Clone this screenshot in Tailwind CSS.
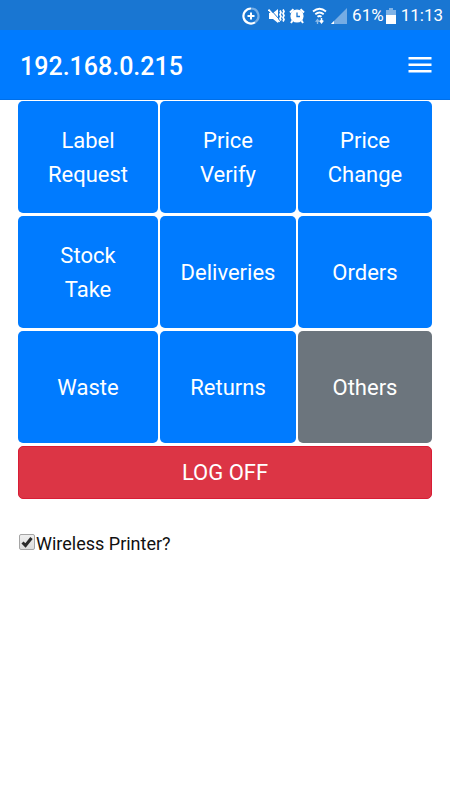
<!DOCTYPE html>
<html lang="en">
<head>
<meta charset="utf-8">
<meta name="viewport" content="width=device-width, initial-scale=1">
<title>192.168.0.215</title>
<script src="https://cdn.jsdelivr.net/npm/@tailwindcss/browser@4"></script>
</head>
<body class="min-h-screen bg-white font-['Roboto',sans-serif] text-[#111]">
  <div class="flex h-[30px] items-center justify-end bg-[#1976d2] pt-px pr-[7px] text-white">
    <svg class="mr-[8px] h-[18px] w-[18px]" viewBox="0 0 18 18" fill="none" stroke="currentColor" aria-hidden="true">
      <path d="M9 1.500A7.500 7.500 0 1 0 13 15.300" stroke-width="2.200"/>
      <path d="M9 1.500A7.500 7.500 0 0 1 13 15.300" stroke-width="2.200" opacity=".4"/>
      <path d="M9 5.500v7M5.500 9h7" stroke-width="2"/>
    </svg>
    <svg class="mr-[4px] h-[16px] w-[17px]" viewBox="0 0 17 16" aria-hidden="true">
      <path d="M1 5h4l5-4v14l-5-4H1z" fill="currentColor"/>
      <path d="M2.500 1.500 11 11" stroke="#1976d2" stroke-width="1"/>
      <path d="M.500 1.500l11 12.500" stroke="currentColor" stroke-width="1.800"/>
      <path d="M12 2.500l1 2-1 2 1 2-1 2 1 2M15 1.500l1 2-1 2 1 2-1 2 1 2-1 2" fill="none" stroke="currentColor" stroke-width="1.700"/>
    </svg>
    <svg class="mr-[7px] h-[16px] w-[16px]" viewBox="0 0 16 16" aria-hidden="true">
      <circle cx="8" cy="8" r="6.600" fill="currentColor"/>
      <path d="M1 4.500 4.500 1.300M15 4.500l-3.500-3.200M3.500 12.500 2 15M12.500 12.500 14 15" stroke="currentColor" stroke-width="2"/>
      <path d="M8 4.500v4h3" fill="none" stroke="#1976d2" stroke-width="1.300"/>
    </svg>
    <svg class="mr-[4px] h-[17px] w-[15px]" viewBox="0 0 15 17" fill="none" stroke="currentColor" aria-hidden="true">
      <path d="M1 4.500Q7.500-1 14 4.500M3.300 7.300q4.200-3.600 8.400 0M5.500 9.800q2-1.700 4 0" stroke-width="1.800"/>
      <path d="M5.500 17v-4M3.700 14.800 5.500 12.500l1.800 2.300" stroke-width="1.300" opacity=".5"/>
      <path d="M9.500 11v4M7.800 13.500l1.700 2.200 1.700-2.200" stroke-width="1.500"/>
    </svg>
    <svg class="mr-[5px] h-[16px] w-[16px]" viewBox="0 0 16 16" fill="currentColor" aria-hidden="true">
      <path d="M16 0v16H0z" opacity=".4"/>
      <path d="M3 13v3H0z"/>
    </svg>
    <span class="text-[17px] leading-[29px]">61%</span>
    <svg class="mr-[5px] ml-[2px] h-[16px] w-[10px]" viewBox="0 0 10 16" fill="currentColor" aria-hidden="true">
      <path d="M3 0h4v2h3v5H0V2h3z" opacity=".45"/>
      <path d="M0 7h10v9H0z"/>
    </svg>
    <span class="text-[17px] leading-[29px]">11:13</span>
  </div>
  <header class="flex h-[70px] items-center justify-between border-b border-[#006fe8] bg-[#007bff] pr-[18px] pl-5 text-white">
    <h1 class="pt-1 text-[25px] leading-8 font-medium">192.168.0.215</h1>
    <button type="button" aria-label="Menu" class="h-6 w-6">
      <svg class="h-6 w-6" viewBox="0 0 24 24" fill="currentColor" aria-hidden="true"><path d="M.500 4h23v2.600H.500zM.500 10.500h23v2.600H.500zM.500 17h23v2.600H.500z"/></svg>
    </button>
  </header>
  <main class="px-[18px] pt-px">
    <div class="grid auto-rows-[112px] grid-cols-[140fr_136fr_134fr] gap-x-[2px] gap-y-[3px] text-[22px] leading-[34px] text-white">
      <button type="button" class="rounded-[5px] bg-[#007bff] pt-0.5">Label<br>Request</button>
      <button type="button" class="rounded-[5px] bg-[#007bff] pt-0.5">Price<br>Verify</button>
      <button type="button" class="rounded-[5px] bg-[#007bff] pt-0.5">Price<br>Change</button>
      <button type="button" class="rounded-[5px] bg-[#007bff] pt-0.5">Stock<br>Take</button>
      <button type="button" class="rounded-[5px] bg-[#007bff] pt-0.5">Deliveries</button>
      <button type="button" class="rounded-[5px] bg-[#007bff] pt-0.5">Orders</button>
      <button type="button" class="rounded-[5px] bg-[#007bff] pt-0.5">Waste</button>
      <button type="button" class="rounded-[5px] bg-[#007bff] pt-0.5">Returns</button>
      <button type="button" class="rounded-[5px] bg-[#6c757d] pt-0.5">Others</button>
    </div>
    <button type="button" class="mt-[3px] h-[53px] w-full rounded-[5px] border border-[#d81d35] bg-[#dc3545] text-[22px] leading-[34px] text-white">LOG OFF</button>
    <div class="mt-8 flex items-center pl-px">
      <span class="relative -mt-1 flex h-4 w-4">
        <input id="wireless" type="checkbox" checked class="peer h-4 w-4 appearance-none rounded-[2px] border border-[#a5a5a5] bg-linear-to-b from-[#eee] to-[#ddd]">
        <svg class="pointer-events-none absolute inset-0 hidden h-4 w-4 peer-checked:block" viewBox="0 0 16 16" fill="none" stroke="#2b2b2b" stroke-width="3" aria-hidden="true"><path d="M3.500 8.500l3 3 6-7.500"/></svg>
      </span>
      <label for="wireless" class="pt-px pl-px text-lg leading-6">Wireless Printer?</label>
    </div>
  </main>
</body>
</html>
